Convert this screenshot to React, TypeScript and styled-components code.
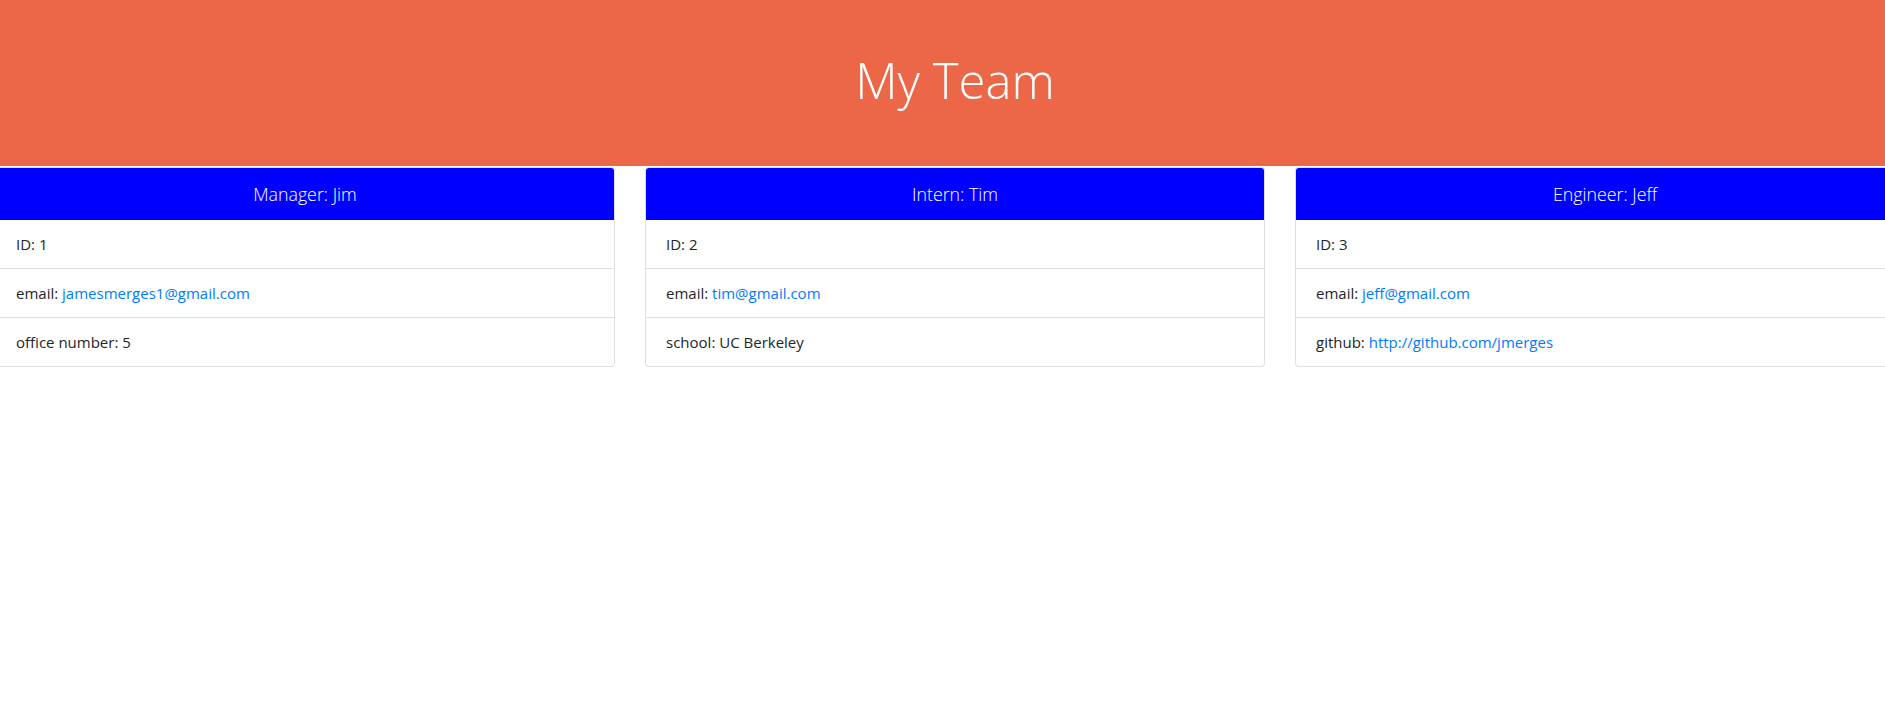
import React from "react";
import styled, { createGlobalStyle } from "styled-components";

const GlobalStyle = createGlobalStyle`
  html, body {
    margin: 0;
    padding: 0;
    background: #ffffff;
  }
  body {
    font-family: "Open Sans", "Noto Sans", Arial, sans-serif;
    color: #212529;
    overflow: hidden;
  }
  * { box-sizing: border-box; }
`;

const Page = styled.div`
  width: 1885px;
  height: 701px;
  overflow: hidden;
`;

const Main = styled.div`
  width: 1950px;
  margin-left: -20px;
`;

const Banner = styled.header`
  height: 166px;
  background: #eb6748;
  display: flex;
  align-items: center;
  justify-content: center;
`;

const Title = styled.h1`
  margin: 0;
  font-family: "Open Sans", "Noto Sans", Arial, sans-serif;
  font-weight: 300;
  font-size: 49px;
  line-height: 1.2;
  color: #ffffff;
  transform: translateY(-3px);
`;

const Row = styled.div`
  display: grid;
  grid-template-columns: repeat(3, 650px);
  margin-top: 1px;
`;

const Column = styled.div`
  padding: 0 15px;
`;

const Card = styled.section`
  border: 1px solid rgba(0, 0, 0, 0.125);
  border-radius: 4px;
  overflow: hidden;
  background: #ffffff;
`;

const CardHeader = styled.div`
  height: 52px;
  background: #0000ff;
  color: #ffffff;
  display: flex;
  align-items: center;
  justify-content: center;
  font-size: 17.8px;
  font-weight: 300;
`;

const List = styled.ul`
  list-style: none;
  margin: 0;
  padding: 0;
`;

const Item = styled.li`
  padding: 12px 20px;
  line-height: 24px;
  font-size: 15px;
  color: #212529;
  & + & {
    border-top: 1px solid rgba(0, 0, 0, 0.125);
  }
`;

const Link = styled.a`
  color: #007bff;
  text-decoration: none;
`;

type Field = { label: string; value: string; href?: string };
type Member = { role: string; name: string; fields: Field[] };

const team: Member[] = [
  {
    role: "Manager",
    name: "Jim",
    fields: [
      { label: "ID", value: "1" },
      { label: "email", value: "jamesmerges1@gmail.com", href: "mailto:jamesmerges1@gmail.com" },
      { label: "office number", value: "5" },
    ],
  },
  {
    role: "Intern",
    name: "Tim",
    fields: [
      { label: "ID", value: "2" },
      { label: "email", value: "tim@gmail.com", href: "mailto:tim@gmail.com" },
      { label: "school", value: "UC Berkeley" },
    ],
  },
  {
    role: "Engineer",
    name: "Jeff",
    fields: [
      { label: "ID", value: "3" },
      { label: "email", value: "jeff@gmail.com", href: "mailto:jeff@gmail.com" },
      { label: "github", value: "http://github.com/jmerges", href: "http://github.com/jmerges" },
    ],
  },
];

export default function App() {
  return (
    <>
      <GlobalStyle />
      <Page>
        <Main>
          <Banner>
            <Title>My Team</Title>
          </Banner>
          <Row>
            {team.map((m) => (
              <Column key={m.name}>
                <Card>
                  <CardHeader>
                    {m.role}: {m.name}
                  </CardHeader>
                  <List>
                    {m.fields.map((f) => (
                      <Item key={f.label}>
                        {f.label}:{" "}
                        {f.href ? <Link href={f.href}>{f.value}</Link> : f.value}
                      </Item>
                    ))}
                  </List>
                </Card>
              </Column>
            ))}
          </Row>
        </Main>
      </Page>
    </>
  );
}
